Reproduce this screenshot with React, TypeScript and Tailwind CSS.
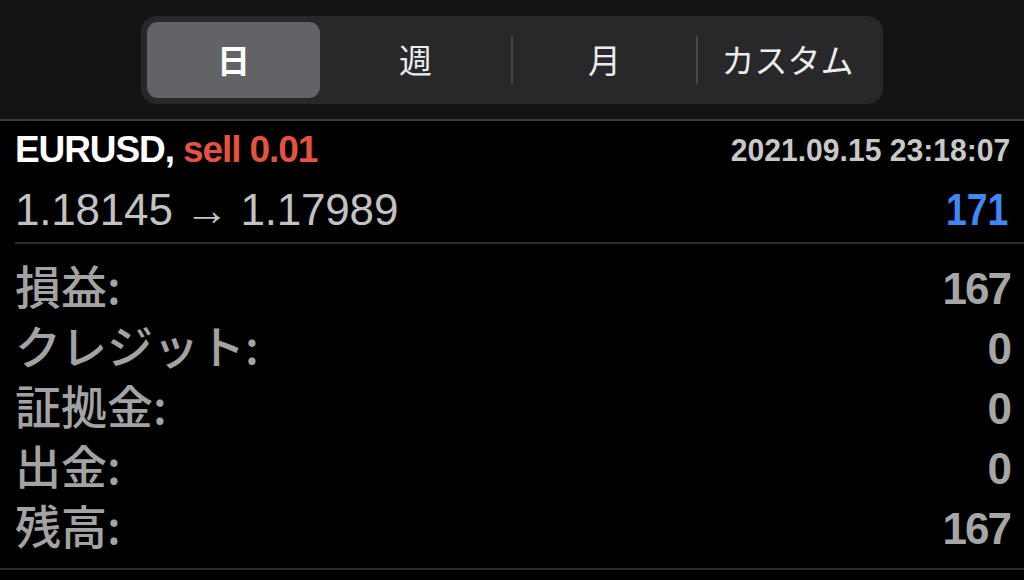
const jp = "font-['Noto_Sans_CJK_JP',sans-serif]";
const num = "font-['Liberation_Sans','Noto_Sans_CJK_JP',sans-serif]";

type Summary = { label: string; value: string };

const SUMMARY: Summary[] = [
  { label: "損益:", value: "167" },
  { label: "クレジット:", value: "0" },
  { label: "証拠金:", value: "0" },
  { label: "出金:", value: "0" },
  { label: "残高:", value: "167" },
];

function Divider() {
  return <div className="h-[48px] w-[2px] shrink-0 bg-[#48484c]" />;
}

function PeriodTabs() {
  return (
    <header className="flex h-[119px] justify-center bg-[#141415] pt-[16px]">
      <div className="flex h-[88px] w-[742px] items-center rounded-[16px] bg-[#28282b] px-[6px] py-[6px]">
        <div
          className={`flex h-[76px] w-[173px] shrink-0 items-center justify-center rounded-[11px] bg-[#636367] text-[33px] font-bold text-white ${jp}`}
        >
          日
        </div>
        <div className={`flex w-[191px] shrink-0 items-center justify-center text-[33px] text-[#ececec] ${jp}`}>
          週
        </div>
        <Divider />
        <div className={`flex w-[183px] shrink-0 items-center justify-center text-[33px] text-[#ececec] ${jp}`}>
          月
        </div>
        <Divider />
        <div className={`flex flex-1 items-center justify-center text-[33px] text-[#ececec] ${jp}`}>
          カスタム
        </div>
      </div>
    </header>
  );
}

export default function App() {
  return (
    <div className="h-[580px] w-[1024px] overflow-hidden bg-black">
      <PeriodTabs />
      <div className="h-[2px] bg-[#3a3a3c]" />

      {/* 取引 */}
      <section className="pl-[15px]">
        <div className="flex items-center justify-between pr-[14px] pt-[7px]">
          <span className={`text-[37px] font-bold leading-[44px] tracking-[-1.1px] text-white ${num}`}>
            EURUSD, <span className="text-[#e4533f]">sell 0.01</span>
          </span>
          <span
            className={`inline-block origin-right scale-x-[0.94] text-[32px] font-bold leading-[44px] text-[#c8c8c8] ${num}`}
          >
            2021.09.15 23:18:07
          </span>
        </div>
        <div className="mt-[12px] flex items-center justify-between pr-[16px]">
          <span className={`text-[44px] leading-[52px] tracking-[-0.2px] text-[#c2c2c2] ${num}`}>
            1.18145 → 1.17989
          </span>
          <span
            className={`inline-block origin-right scale-x-[0.85] text-[44px] font-bold leading-[52px] text-[#3f88f5] ${num}`}
          >
            171
          </span>
        </div>
        <div className="mt-[6px] h-[2px] bg-[#2c2c2e]" />
      </section>

      {/* 集計 */}
      <section className="pb-[14px] pl-[15px] pr-[14px] pt-[10px]">
        {SUMMARY.map((s) => (
          <div key={s.label} className="flex h-[60px] items-center justify-between">
            <span className={`text-[46px] font-medium leading-[60px] text-[#a3a3a3] ${jp}`}>{s.label}</span>
            <span className={`pt-[9px] text-[44px] font-bold leading-[60px] tracking-[-2px] text-[#a6a6a6] ${num}`}>
              {s.value}
            </span>
          </div>
        ))}
      </section>
      <div className="h-[2px] bg-[#2c2c2e]" />
    </div>
  );
}
